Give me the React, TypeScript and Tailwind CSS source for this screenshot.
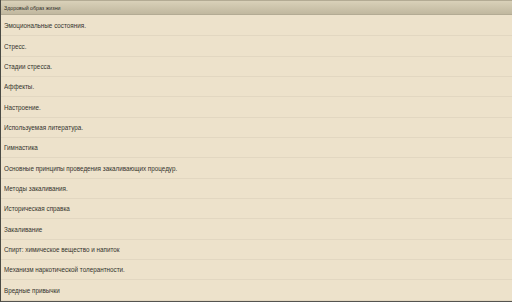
import React from 'react';

const items: string[] = [
  'Эмоциональные состояния.',
  'Стресс.',
  'Стадии стресса.',
  'Аффекты.',
  'Настроение.',
  'Используемая литература.',
  'Гимнастика',
  'Основные принципы проведения закаливающих процедур.',
  'Методы закаливания.',
  'Историческая справка',
  'Закаливание',
  'Спирт: химическое вещество и напиток',
  'Механизм наркотической толерантности.',
  'Вредные привычки',
];

const App: React.FC = () => {
  return (
    <div className="w-[512px] h-[302px] overflow-hidden flex flex-col bg-[#ede2cb] border-l border-[#4a4a44] font-['Liberation_Sans',Arial,sans-serif]">
      <div className="h-[15px] shrink-0 border-t border-[#6e6c64] bg-gradient-to-b from-[#d9d1b9] to-[#c1b89f] border-b border-[#b3ab94] flex items-center px-[3px]">
        <span className="text-[6px] leading-none text-[#2f2f29] whitespace-nowrap origin-left scale-x-[0.88]">Здоровый образ жизни</span>
      </div>
      <ul className="flex-1 flex flex-col pt-[1px]">
        {items.map(t => (
          <li key={t} className="h-[20.35px] shrink-0 border-b border-[#e2d7c1] flex items-center px-[3px]">
            <span className="text-[7px] leading-none text-[#33332c] whitespace-nowrap origin-left scale-x-[0.9]">{t}</span>
          </li>
        ))}
      </ul>
      <div className="h-[4px] shrink-0 bg-[#55544f]" />
    </div>
  );
};

export default App;
